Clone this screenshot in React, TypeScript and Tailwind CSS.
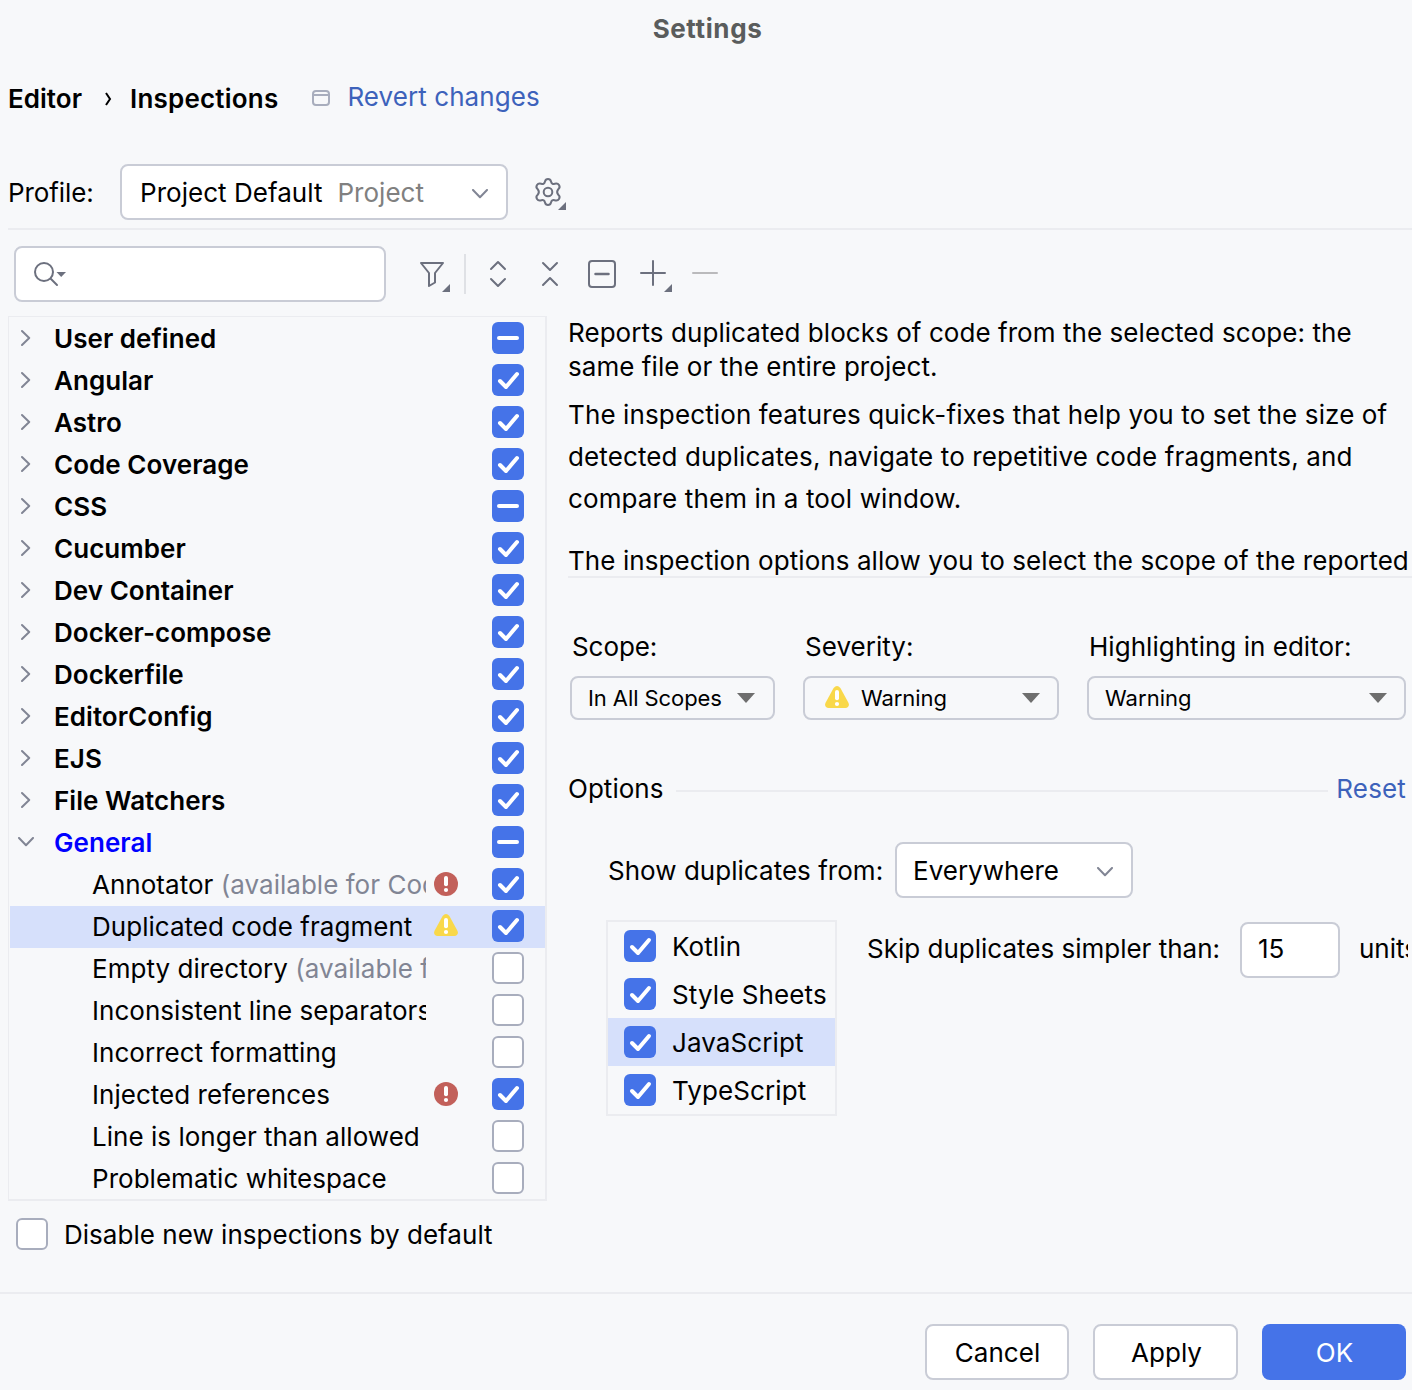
import { clsx } from "clsx";

type CheckState = "on" | "off" | "mixed";

type Inspection = {
  name: string;
  note?: string;
  severity?: "error" | "warning";
  state: CheckState;
  selected?: boolean;
};

const groups: { name: string; state: CheckState; open?: boolean }[] = [
  { name: "User defined", state: "mixed" },
  { name: "Angular", state: "on" },
  { name: "Astro", state: "on" },
  { name: "Code Coverage", state: "on" },
  { name: "CSS", state: "mixed" },
  { name: "Cucumber", state: "on" },
  { name: "Dev Container", state: "on" },
  { name: "Docker-compose", state: "on" },
  { name: "Dockerfile", state: "on" },
  { name: "EditorConfig", state: "on" },
  { name: "EJS", state: "on" },
  { name: "File Watchers", state: "on" },
  { name: "General", state: "mixed", open: true },
];

const inspections: Inspection[] = [
  { name: "Annotator", note: "(available for Code", severity: "error", state: "on" },
  { name: "Duplicated code fragment", severity: "warning", state: "on", selected: true },
  { name: "Empty directory", note: "(available for", state: "off" },
  { name: "Inconsistent line separators", state: "off" },
  { name: "Incorrect formatting", state: "off" },
  { name: "Injected references", severity: "error", state: "on" },
  { name: "Line is longer than allowed", state: "off" },
  { name: "Problematic whitespace", state: "off" },
];

const languages = ["Kotlin", "Style Sheets", "JavaScript", "TypeScript"];

const Checkbox = ({ state }: { state: CheckState }) => (
  <div
    className={clsx(
      "size-8 shrink-0 rounded-[6px]",
      state === "off" ? "border-2 border-[#a8adbd] bg-white" : "bg-[#4573e8]"
    )}
  >
    {state !== "off" && (
      <svg viewBox="0 0 32 32" className="size-8" fill="none" stroke="white" strokeWidth="4" strokeLinecap="round" strokeLinejoin="round">
        {state === "on" ? <path d="M8 17 14 23 25 10" /> : <path d="M7 16h18" />}
      </svg>
    )}
  </div>
);

const Chevron = ({ className }: { className?: string }) => (
  <svg viewBox="0 0 18 10" className={clsx("h-2.5 w-[18px] shrink-0", className)} fill="none" stroke="#818594" strokeWidth="2" strokeLinecap="round" strokeLinejoin="round">
    <path d="M2 1l7 7.2L16 1" />
  </svg>
);

const Arrow = () => (
  <svg viewBox="0 0 18 10" className="h-2.5 w-[18px] shrink-0" fill="#6e6e6e">
    <path d="M0 0h18l-9 10z" />
  </svg>
);

const SeverityIcon = ({ type }: { type: "error" | "warning" }) => (
  <svg viewBox="0 0 24 24" className="size-6 shrink-0">
    {type === "error" ? (
      <circle cx="12" cy="12" r="12" fill="#c2605a" />
    ) : (
      <path d="M8.600 2Q12-1.900 15.400 2L23.300 16.500C25 19.700 23 22 20.500 22H3.500C1 22-1 19.700.7 16.500z" fill="#f9d84a" />
    )}
    <path d="M12 6v6.200" stroke="white" strokeWidth="4" strokeLinecap="round" />
    <circle cx="12" cy="18" r="2.100" fill="white" />
  </svg>
);

const iconProps = {
  fill: "none",
  stroke: "#6c707e",
  strokeWidth: 2,
  strokeLinecap: "round",
  strokeLinejoin: "round",
} as const;

const Row = ({ children, selected }: { children: React.ReactNode; selected?: boolean }) => (
  <div className={clsx("flex h-[42px] shrink-0 items-center pr-[21px] pb-0.5", selected ? "ml-px bg-[#d6e0fb]" : "pl-px")}>
    {children}
  </div>
);

const Tree = () => (
  <div className="flex h-[885px] w-[539px] shrink-0 flex-col overflow-hidden border-2 border-t border-l border-[#ebecf0] pt-px">
    {groups.map((g) => (
      <Row key={g.name}>
        <div className="flex w-8 justify-center">
          <Chevron className={g.open ? "" : "-rotate-90"} />
        </div>
        <span className={clsx("ml-3 flex-1 pt-0.5 font-semibold tracking-[0.04px]", g.open && "text-[#0000ff]")}>{g.name}</span>
        <Checkbox state={g.state} />
      </Row>
    ))}
    {inspections.map((i) => (
      <Row key={i.name} selected={i.selected}>
        <div className="ml-[82px] w-[334px] overflow-hidden pt-0.5 whitespace-nowrap">
          {i.name}
          {i.note && <span className="text-[#818594]"> {i.note}</span>}
        </div>
        <div className="ml-2 flex-1">{i.severity && <SeverityIcon type={i.severity} />}</div>
        <Checkbox state={i.state} />
      </Row>
    ))}
  </div>
);

const Header = () => (
  <>
    <div className="flex h-[58px] items-center justify-center pl-[3px] font-bold tracking-[0.6px] text-[#5a5c5c]">Settings</div>
    <div className="flex h-20 items-center pl-2">
      <span className="pt-0.5 font-semibold">Editor</span>
      <svg viewBox="0 0 8 16" className="mr-[18px] ml-[22px] h-4 w-2" fill="none" stroke="black" strokeWidth="2">
        <path d="M2 3l4 6L2 15" />
      </svg>
      <span className="pt-0.5 font-semibold tracking-[0.2px]">Inspections</span>
      <svg viewBox="0 0 18 16" className="ml-[34px] h-4 w-[18px]" fill="none" stroke="#a8adbd" strokeWidth="2">
        <rect x="1" y="1" width="16" height="14" rx="3" />
        <path d="M1 5h16" />
      </svg>
      <span className="-mt-0.5 ml-[17px] tracking-[0.08px] text-[#3d62bb]">Revert changes</span>
    </div>
    <div className="ml-2 flex h-[92px] items-center border-b-2 border-[#ebecf0] pt-[18px]">
      <span className="w-28 pt-0.5 tracking-[-0.08px]">Profile:</span>
      <div className="flex h-14 w-[388px] items-center rounded-lg border-2 border-[#c9ccd6] bg-white pr-[17px] pl-[18px]">
        <span className="pt-0.5">Project Default</span>
        <span className="ml-[15px] flex-1 pt-0.5 text-[#808080]">Project</span>
        <Chevron className="mt-1" />
      </div>
      <svg viewBox="0 0 34 34" className="mt-0.5 ml-6 size-[34px]" {...iconProps}>
        <path d="M13 5.500Q13.600 3 16 3T19 5.500Q19.800 8.600 22.600 7.800Q25.600 6.700 27 9Q28.500 11.400 26.300 13.200Q24 16 26.300 18.800Q28.500 20.600 27 23Q25.600 25.300 22.600 24.200Q19.800 23.400 19 26.500Q18.400 29 16 29T13 26.500Q12.200 23.400 9.400 24.200Q6.400 25.300 5 23Q3.500 20.600 5.700 18.800Q8 16 5.700 13.200Q3.500 11.400 5 9Q6.400 6.700 9.400 7.800Q12.200 8.600 13 5.500z" />
        <circle cx="16" cy="16" r="4.300" />
        <path d="M34 26v8h-8z" fill="#6c707e" stroke="none" />
      </svg>
    </div>
  </>
);

const Toolbar = () => (
  <div className="flex h-[86px] items-center pt-0.5 pl-3.5">
    <div className="flex h-14 w-[372px] items-center rounded-lg border-2 border-[#c9ccd6] bg-white pl-4">
      <svg viewBox="0 0 34 28" className="h-7 w-[34px]" {...iconProps}>
        <circle cx="12" cy="12" r="9" />
        <path d="M19 19l6 6" />
        <path d="M24.500 12H34l-4.800 5z" fill="#6c707e" stroke="none" />
      </svg>
    </div>
    <svg viewBox="0 0 300 40" className="ml-[34px] h-10 w-[300px]" {...iconProps}>
      {/* filter */}
      <path d="M1 9h22l-8 10v9.500l-6 3.500V19z" />
      <path d="M30 30v8h-8z" fill="#6c707e" stroke="none" />
      <path d="M45 0v40" stroke="#dfe1e5" strokeLinecap="butt" />
      {/* expand and collapse */}
      <path d="M71 15l7-7 7 7M71 25l7 7 7-7" />
      <path d="M123 9l7 7 7-7M123 31l7-7 7 7" />
      {/* reset */}
      <rect x="169" y="7" width="26" height="26" rx="3" />
      <path d="M175.500 20h13" strokeWidth="2.500" />
      {/* add and remove */}
      <path d="M233 7v24M221 19h24" />
      <path d="M252 30v8h-8z" fill="#6c707e" stroke="none" />
      <path d="M273 19h24" stroke="#bababc" />
    </svg>
  </div>
);

const Details = () => (
  <div className="flex min-w-0 flex-1 flex-col pl-[21px]">
    <div className="h-[262px] overflow-hidden border-b-2 border-[#ebecf0] whitespace-nowrap">
      <p className="leading-[34px] tracking-[0.06px]">
        Reports duplicated blocks of code from the selected scope: the
        <br />
        same file or the entire project.
      </p>
      <p className="mt-2.5 leading-[42px] tracking-[0.12px]">
        The inspection features quick-fixes that help you to set the size of
        <br />
        detected duplicates, navigate to repetitive code fragments, and
        <br />
        compare them in a tool window.
      </p>
      <p className="mt-5 leading-[42px] tracking-[0.07px]">The inspection options allow you to select the scope of the reported</p>
    </div>

    {/* scope and severity */}
    <div className="mt-[49px] flex gap-[28px] pl-0.5">
      <div className="w-[205px]">
        <div className="mb-[9px] h-10 pl-0.5 leading-10 tracking-[-0.08px]">Scope:</div>
        <div className="flex h-11 items-center justify-between rounded-lg border-2 border-[#c9ccd6] pr-[18px] pl-4 text-[22px] tracking-[-0.08px]">
          In All Scopes
          <Arrow />
        </div>
      </div>
      <div className="w-64">
        <div className="mb-[9px] h-10 pl-0.5 leading-10">Severity:</div>
        <div className="flex h-11 items-center rounded-lg border-2 border-[#c9ccd6] pr-[17px] pl-5 text-[22px]">
          <SeverityIcon type="warning" />
          <span className="ml-3 flex-1 tracking-[-0.08px]">Warning</span>
          <Arrow />
        </div>
      </div>
      <div className="w-[319px]">
        <div className="mb-[9px] h-10 pl-0.5 leading-10">Highlighting in editor:</div>
        <div className="flex h-11 items-center justify-between rounded-lg border-2 border-[#c9ccd6] pr-[17px] pl-4 text-[22px]">
          Warning
          <Arrow />
        </div>
      </div>
    </div>

    {/* options */}
    <div className="mt-[49px] flex h-10 items-center pr-1.5">
      Options
      <div className="mt-1 mr-2 ml-3 h-0.5 flex-1 bg-[#ebecf0]" />
      <span className="tracking-[0.15px] text-[#3d62bb]">Reset</span>
    </div>
    <div className="mt-[33px] flex items-center pl-10">
      <span className="w-[287px] pt-0.5 whitespace-nowrap">Show duplicates from:</span>
      <div className="flex h-14 w-[238px] items-center justify-between rounded-lg border-2 border-[#c9ccd6] bg-white pr-[17px] pl-4">
        <span className="pt-0.5 tracking-normal">Everywhere</span>
        <Chevron className="mt-1" />
      </div>
    </div>
    <div className="mt-[22px] flex items-start pl-[38px]">
      <div className="w-[231px] shrink-0 border-2 border-[#ebecf0]">
        {languages.map((lang) => (
          <div key={lang} className={clsx("flex h-12 items-center gap-4 pl-4 tracking-[0.1px] whitespace-nowrap", lang === "JavaScript" && "bg-[#d6e0fb]")}>
            <Checkbox state="on" />
            <span className="pt-0.5">{lang}</span>
          </div>
        ))}
      </div>
      <div className="mt-0.5 mr-1 flex min-w-0 flex-1 items-center overflow-hidden pl-[30px] tracking-normal whitespace-nowrap">
        <span className="w-[373px] shrink-0 pb-0.5">Skip duplicates simpler than:</span>
        <div className="flex h-14 w-[100px] shrink-0 items-center rounded-lg border-2 border-[#c9ccd6] bg-white pb-0.5 pl-4">15</div>
        <span className="ml-[19px] pb-0.5">units</span>
      </div>
    </div>
  </div>
);

const Footer = () => (
  <div className="flex h-[98px] shrink-0 justify-end gap-6 border-t-2 border-[#ebecf0] pt-[30px] pr-1.5">
    <div className="flex h-14 w-36 items-center justify-center rounded-lg border-2 border-[#c9ccd6] bg-white pt-0.5 pl-px">Cancel</div>
    <div className="flex h-14 w-[145px] items-center justify-center rounded-lg border-2 border-[#c9ccd6] bg-white pt-0.5 pl-0.5">Apply</div>
    <div className="flex h-14 w-36 items-center justify-center rounded-lg bg-[#4573e8] pt-0.5 pl-px text-white">OK</div>
  </div>
);

const App = () => {
  return (
    <div className="flex h-[1390px] w-[1412px] flex-col overflow-hidden bg-[#f7f8fa] font-['Inter',sans-serif] text-[26px] leading-8 tracking-[0.03px] text-black">
      <Header />
      <Toolbar />
      <div className="flex pl-2">
        <Tree />
        <Details />
      </div>
      <div className="flex flex-1 items-start gap-4 pt-[17px] pl-4">
        <Checkbox state="off" />
        <span className="pt-px">Disable new inspections by default</span>
      </div>
      <Footer />
    </div>
  );
};

export default App;
